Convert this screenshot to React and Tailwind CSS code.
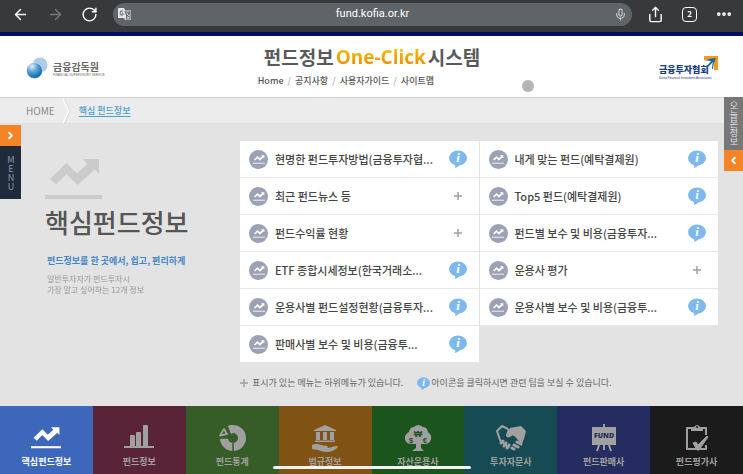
import { ArrowLeft, ArrowRight, ChevronLeft, ChevronRight, Ellipsis, Mic, RotateCw, Share } from 'lucide-react';

const leftMenu = [
  { label: '현명한 펀드투자방법(금융투자협...', tip: true },
  { label: '최근 펀드뉴스 등' },
  { label: '펀드수익률 현황' },
  { label: 'ETF 종합시세정보(한국거래소...', tip: true },
  { label: '운용사별 펀드설정현황(금융투자...', tip: true },
  { label: '판매사별 보수 및 비용(금융투...', tip: true },
];

const rightMenu = [
  { label: '내게 맞는 펀드(예탁결제원)', tip: true },
  { label: 'Top5 펀드(예탁결제원)', tip: true },
  { label: '펀드별 보수 및 비용(금융투자...', tip: true },
  { label: '운용사 평가' },
  { label: '운용사별 보수 및 비용(금융투...', tip: true },
];

const TrendIcon = ({ className }) => (
  <svg viewBox="0 0 57 41" className={className} fill="currentColor" aria-hidden="true">
    <path d="M5 20 21.500 4 32 14.500 42.500 5 38 0h16v15l-4-4.500L32.500 26 21.500 15 11 25.500z" />
    <path d="M0 36h57v4H0z" />
  </svg>
);

const BarsIcon = () => (
  <svg viewBox="0 0 30 28" className="h-7 w-[30px]" fill="currentColor" aria-hidden="true">
    <path d="M0 22h30v2H0zM6 12q0-1 1-1h3q1 0 1 1v11H6zM12 9q0-1 1-1h3q1 0 1 1v14h-5zM19 2q0-1 1-1h3q1 0 1 1v21h-5z" />
  </svg>
);

const DonutIcon = () => (
  <svg viewBox="0 0 28 28" className="h-7 w-7" aria-hidden="true">
    <circle cx="15" cy="14" r="9" fill="none" stroke="currentColor" strokeWidth="8" />
    <path d="M15 19v9M0 14h10M15 14 5 0" stroke="#365c27" strokeWidth="1.500" />
    <path d="M0 14V2l9-2 4 8-2 6z" fill="#365c27" />
    <path d="M10 2q2-1 5-1v8l-2 1z" fill="currentColor" />
    <path d="M2 11.500 6 5l3 5z" fill="none" stroke="currentColor" strokeWidth="1.800" strokeLinejoin="round" />
  </svg>
);

const LawIcon = () => (
  <svg viewBox="0 0 28 28" className="h-7 w-7" fill="currentColor" aria-hidden="true">
    <path d="M14 1 25 6v1H3V6zM5 8h4v8H5zM12 8h4v8h-4zM19 8h4v8h-4zM4 16.500h20V18H4z" />
    <path d="M1 21q5-2 9 0l6 1q2 1 0 2h-5 6l8-2q3 0 1 2-4 4-10 4-5 0-9-2l-6-1z" />
  </svg>
);

const TreeIcon = () => (
  <svg viewBox="0 0 28 28" className="h-7 w-7" aria-hidden="true">
    <path
      d="M5 8Q6 3 10 3q4-4 9 0 4 0 5 5 4 3 3 7-1 5-6 5h-4v4l3 3H8l4-3v-4H7q-5 0-6-5-1-4 4-7z"
      fill="currentColor"
    />
    <g fill="#1c541e" fontFamily="Liberation Sans" fontWeight="bold" textAnchor="middle">
      <text x="14" y="13" fontSize="9">₩</text>
      <text x="7" y="19" fontSize="8">$</text>
      <text x="21" y="19" fontSize="8">€</text>
    </g>
  </svg>
);

const HandshakeIcon = () => (
  <svg viewBox="0 0 30 28" className="h-7 w-[30px]" aria-hidden="true">
    <path
      d="M12 5 6 2 1 7l3 9 2 3M13 5l-2 6q2 3 5-1l3 1 7 8M4 16l9 8"
      fill="none"
      stroke="currentColor"
      strokeWidth="2"
      strokeLinejoin="round"
    />
    <path d="m14 4 5-1 6-1 5 5-2 8-2 4-7-7-3-1q-4 4-6 1z" fill="currentColor" />
    <path d="m7 17-2 2M10 19l-2 3M13 21l-2 3M16 24l2 1M18 21l4 2M21 18l4 2" stroke="currentColor" strokeWidth="3" strokeLinecap="round" />
  </svg>
);

const BoardIcon = () => (
  <svg viewBox="0 0 26 28" className="h-7 w-[26px]" aria-hidden="true">
    <path d="M12 0h2v3h-2zM1 3h24v18H1zM12 21h2v5h-2zM7 21h2l-2 6H5zM17 21h2l2 6h-2z" fill="currentColor" />
    <text x="13" y="14" fontSize="7" fontFamily="Noto Sans" fontWeight="900" textAnchor="middle" fill="#252d60">
      FUND
    </text>
  </svg>
);

const ClipboardIcon = () => (
  <svg viewBox="0 0 26 28" className="h-7 w-[26px]" fill="none" stroke="currentColor" aria-hidden="true">
    <path d="M7 4H3v21h19v-4M19 4h3v7" strokeWidth="2" strokeLinejoin="round" />
    <path d="M7 7h12V3h-3q-3-4-6 0H7z" fill="currentColor" stroke="none" />
    <circle cx="13" cy="3" r="1" fill="#1b1b1b" stroke="none" />
    <path d="m9 19 3-1 2 3 9-9 1 1-9 13h-2z" fill="currentColor" strokeWidth="1" />
  </svg>
);

const categories = [
  { label: '핵심펀드정보', color: 'bg-[#3c67bb]', icon: <TrendIcon className="h-6 w-[30px]" />, active: true },
  { label: '펀드정보', color: 'bg-[#5a2438]', icon: <BarsIcon /> },
  { label: '펀드통계', color: 'bg-[#365c27]', icon: <DonutIcon /> },
  { label: '법규정보', color: 'bg-[#805314]', icon: <LawIcon /> },
  { label: '자산운용사', color: 'bg-[#1c541e]', icon: <TreeIcon /> },
  { label: '투자자문사', color: 'bg-[#174b53]', icon: <HandshakeIcon /> },
  { label: '펀드판매사', color: 'bg-[#252d60]', icon: <BoardIcon /> },
  { label: '펀드평가사', color: 'bg-[#1b1b1b]', icon: <ClipboardIcon /> },
];

const InfoBubble = ({ className }) => (
  <svg viewBox="0 0 18 18" className={className} aria-hidden="true">
    <ellipse cx="9" cy="8" rx="9" ry="7.500" fill="#7db9ee" />
    <path d="M5 13h7q-2 4-6 5 1-2-1-5z" fill="#7db9ee" />
    <text x="9" y="12" fontSize="13" fontFamily="Liberation Serif" fontStyle="italic" fontWeight="bold" textAnchor="middle" fill="#fff">
      i
    </text>
  </svg>
);

const PlusIcon = () => (
  <svg viewBox="0 0 8 8" className="h-2 w-2" aria-hidden="true">
    <path d="M4 0v8M0 4h8" stroke="#a0a0a0" strokeWidth="1.500" />
  </svg>
);

const TranslateIcon = () => (
  <svg viewBox="0 0 13 13" className="h-[13px] w-[13px] shrink-0" aria-hidden="true">
    <path d="M1 0h5l1 2h5q1 0 1 1v8q0 1-1 1H7L6 10H1q-1 0-1-1V1q0-1 1-1z" fill="#e4e5e6" />
    <path d="M7 3h5v8H8l1-2zM8 5h4M10 4v1M11 5q0 2-3 4M8 6l3 3" fill="none" stroke="#5f6468" strokeWidth="1" />
    <path d="M5 3Q2 2 2 5t3 2V5H4" fill="none" stroke="#5f6468" strokeWidth="1" />
  </svg>
);

const BrowserBar = () => (
  <div className="flex h-8 items-center bg-[#38393b] pr-[10px] pl-3 pb-1 text-white">
    <button aria-label="뒤로"><ArrowLeft size={17} strokeWidth={2} /></button>
    <button aria-label="앞으로" className="ml-[18px] text-[#77787a]"><ArrowRight size={17} strokeWidth={2} /></button>
    <button aria-label="새로고침" className="ml-[17px]"><RotateCw size={17} strokeWidth={2} /></button>
    <div className="ml-[15px] flex h-[23px] flex-1 items-center rounded-full bg-[#5f6468] px-[5px]">
      <TranslateIcon />
      <input
        aria-label="주소"
        defaultValue="fund.kofia.or.kr"
        className="min-w-0 flex-1 text-center font-['Roboto',sans-serif] text-[11px] outline-none"
      />
      <button aria-label="음성 검색"><Mic size={13} strokeWidth={2} className="text-[#d0d1d2]" /></button>
    </div>
    <button aria-label="공유" className="ml-[15px]"><Share size={17} strokeWidth={2} /></button>
    <button aria-label="탭" className="ml-[18px] flex h-[15px] w-[15px] items-center justify-center rounded-[4px] border border-white text-[8px] font-bold">2</button>
    <button aria-label="더보기" className="ml-[18px]"><Ellipsis size={18} strokeWidth={3} /></button>
  </div>
);

const Header = () => (
  <header className="grid h-[62px] grid-cols-[1fr_auto_1fr] border-b border-[#d2d2d2] bg-white pr-[25px] pl-[26px]">
    <a href="#fss" className="mt-[21px] flex h-[22px] items-start gap-[5px] text-[#666]">
      <svg viewBox="0 0 22 22" className="h-[22px] w-[22px]" aria-hidden="true">
        <defs>
          <radialGradient id="globe" cx="35%" cy="25%" r="75%">
            <stop offset="0" stopColor="#e4f1fb" />
            <stop offset=".45" stopColor="#5ba3d6" />
            <stop offset="1" stopColor="#0067ac" />
          </radialGradient>
        </defs>
        <circle cx="14" cy="8" r="7.500" fill="#a9c6ea" />
        <path d="M11 2q7-1 9 7M12 4q5 0 6 6" fill="none" stroke="#d9e7f7" strokeWidth="1" strokeDasharray="1 1" />
        <circle cx="8.500" cy="13.500" r="8" fill="url(#globe)" stroke="#fff" strokeWidth=".6" />
      </svg>
      <span className="flex flex-col pt-1">
        <span className="text-[10px] leading-3 font-bold">금융감독원</span>
        <span className="font-['Liberation_Sans',sans-serif] text-[3px] leading-[4px] whitespace-nowrap">FINANCIAL SUPERVISORY SERVICE</span>
      </span>
    </a>

    <div className="pt-[9px]">
      <h1 className="flex items-center gap-[2px] px-[6px] text-[19px] leading-6 font-bold text-[#5a5a5a]">
        펀드정보
        <span className="bg-linear-to-b from-[#f2c800] to-[#f08200] bg-clip-text font-['Open_Sans',sans-serif] text-[19px] text-transparent">One-Click</span>
        시스템
      </h1>
      <nav className="mt-[6px] flex text-[9px] leading-3 font-medium text-[#555]">
        <a href="#home">Home</a>
        <span className="px-1 text-[#aaa]">/</span>
        <a href="#notice">공지사항</a>
        <span className="px-1 text-[#aaa]">/</span>
        <a href="#guide">사용자가이드</a>
        <span className="px-1 text-[#aaa]">/</span>
        <a href="#sitemap">사이트맵</a>
      </nav>
    </div>

    <a href="#kofia" className="mt-5 flex h-6 items-start justify-self-end text-[#1b3d80]">
      <span className="flex w-[50px] flex-col pt-2">
        <span className="text-[9px] leading-3 font-black whitespace-nowrap">금융투자협회</span>
        <span className="font-['Liberation_Sans',sans-serif] text-[3px] leading-[4px] whitespace-nowrap">Korea Financial Investment Association</span>
      </span>
      <svg viewBox="0 0 14 14" className="-ml-[5px] h-[14px] w-[14px]" aria-hidden="true">
        <path d="M0 0h14v14h-4V4H0z" fill="#f29a1f" />
        <path d="M0 5q6-3 12-3-3 5-3 11H8q0-4 1-7L2 13q2-5 5-8-4-1-7 0z" fill="#1465a8" />
      </svg>
    </a>
  </header>
);

const Breadcrumb = () => (
  <nav className="flex h-[26px] items-center border-b border-[#dedede] bg-[#ececec] pl-[26px] text-[#8a8a8a]">
    <a href="#home" className="text-[10px]">HOME</a>
    <svg viewBox="0 0 8 26" className="mx-[8px] h-[26px] w-2" aria-hidden="true">
      <path d="M0 0 6 13 0 26" fill="none" stroke="#fff" strokeWidth="2" />
      <path d="M1 0 7 13 1 26" fill="none" stroke="#d6d6d6" />
    </svg>
    <a href="#core" className="text-[9px] font-medium text-[#4a9fd0] underline underline-offset-2">핵심 펀드정보</a>
  </nav>
);

const MenuRow = ({ label, tip }) => (
  <li className="flex h-[37px] items-center border-b border-[#e6e6e6] bg-white pr-3 pl-[9px]">
    <span className="flex h-[19px] w-[19px] shrink-0 items-center justify-center rounded-full bg-[#9da1b5] text-white">
      <TrendIcon className="h-[9px] w-3" />
    </span>
    <a href="#menu" className="ml-[7px] flex-1 text-[11px] font-medium whitespace-nowrap text-[#444]">{label}</a>
    <button aria-label={tip ? '관련 팁' : '하위메뉴'} className="flex w-[18px] justify-center">
      {tip ? <InfoBubble className="h-[18px] w-[18px]" /> : <PlusIcon />}
    </button>
  </li>
);

const CategoryTab = ({ label, color, icon, active }) => (
  <a
    href="#category"
    className={`flex h-full flex-col items-center pt-[18px] text-[9px] leading-3 font-bold ${color} ${active ? 'text-white' : 'text-[#a0a0a0]'}`}
  >
    <span className="flex h-7 items-center">{icon}</span>
    <span className="mt-1">{label}</span>
  </a>
);

const App = () => {
  return (
    <div className="relative flex min-h-screen flex-col bg-[#e3e3e3] font-['Noto_Sans_CJK_KR',sans-serif]">
      <BrowserBar />
      <div className="h-1 bg-[#000b66]" />
      <Header />
      <Breadcrumb />

      <main className="flex flex-1 pt-[17px] pr-[25px]">
        <section className="w-60 shrink-0 pt-[18px] pl-[45px]">
          <TrendIcon className="h-[41px] w-[57px] text-[#cbcbcb]" />
          <h2 className="mt-1 text-[26px] leading-9 font-medium text-[#555]">핵심펀드정보</h2>
          <p className="mt-[13px] pl-[2px] text-[9px] leading-4 font-bold text-[#4487c7]">펀드정보를 한 곳에서, 쉽고, 편리하게</p>
          <p className="mt-1 pl-[2px] text-[8px] leading-[11px] text-[#999]">
            일반투자자가 펀드투자시<br />
            가장 알고 싶어하는 12개 정보
          </p>
        </section>

        <section className="flex-1">
          <div className="grid grid-cols-2 items-start gap-px">
            <ul>
              {leftMenu.map((item) => <MenuRow key={item.label} {...item} />)}
            </ul>
            <ul>
              {rightMenu.map((item) => <MenuRow key={item.label} {...item} />)}
            </ul>
          </div>
          <p className="mt-3 flex items-center text-[9px] leading-4 text-[#666]">
            <PlusIcon />
            <span className="ml-1">표시가 있는 메뉴는 하위메뉴가 있습니다.</span>
            <InfoBubble className="ml-[14px] h-[13px] w-[13px]" />
            <span className="ml-px">아이콘을 클릭하시면 관련 팁을 보실 수 있습니다.</span>
          </p>
        </section>
      </main>

      <nav className="grid h-[68px] grid-cols-8">
        {categories.map((category) => <CategoryTab key={category.label} {...category} />)}
      </nav>

      {/* fixed side tabs */}
      <button className="absolute top-[125px] left-0 flex w-[21px] flex-col items-center bg-[#1f2b3a] text-[#8d97a8]">
        <span className="flex h-[21px] w-full items-center justify-center bg-[#f58426] text-white">
          <ChevronRight size={11} strokeWidth={4} />
        </span>
        <span className="flex h-[53px] items-center justify-center text-[9px] leading-3 [text-orientation:upright] [writing-mode:vertical-rl]">MENU</span>
      </button>
      <button className="absolute top-[97px] right-0 flex w-[19px] flex-col items-center bg-[#777] text-[#e0e0e0]">
        <span className="flex h-[53px] items-center justify-center text-[9px] leading-3 [writing-mode:vertical-rl]">오늘본정보</span>
        <span className="flex h-[21px] w-full items-center justify-center bg-[#f58426] text-white">
          <ChevronLeft size={11} strokeWidth={4} />
        </span>
      </button>

      <div className="absolute top-20 left-[70%] h-3 w-3 translate-x-0.5 rounded-full bg-[#b4b4b4]" />
      <div className="absolute bottom-[5px] left-1/2 h-[3px] w-[198px] -translate-x-1/2 rounded-full bg-[#f2f2f2]" />
    </div>
  );
};

export default App;
